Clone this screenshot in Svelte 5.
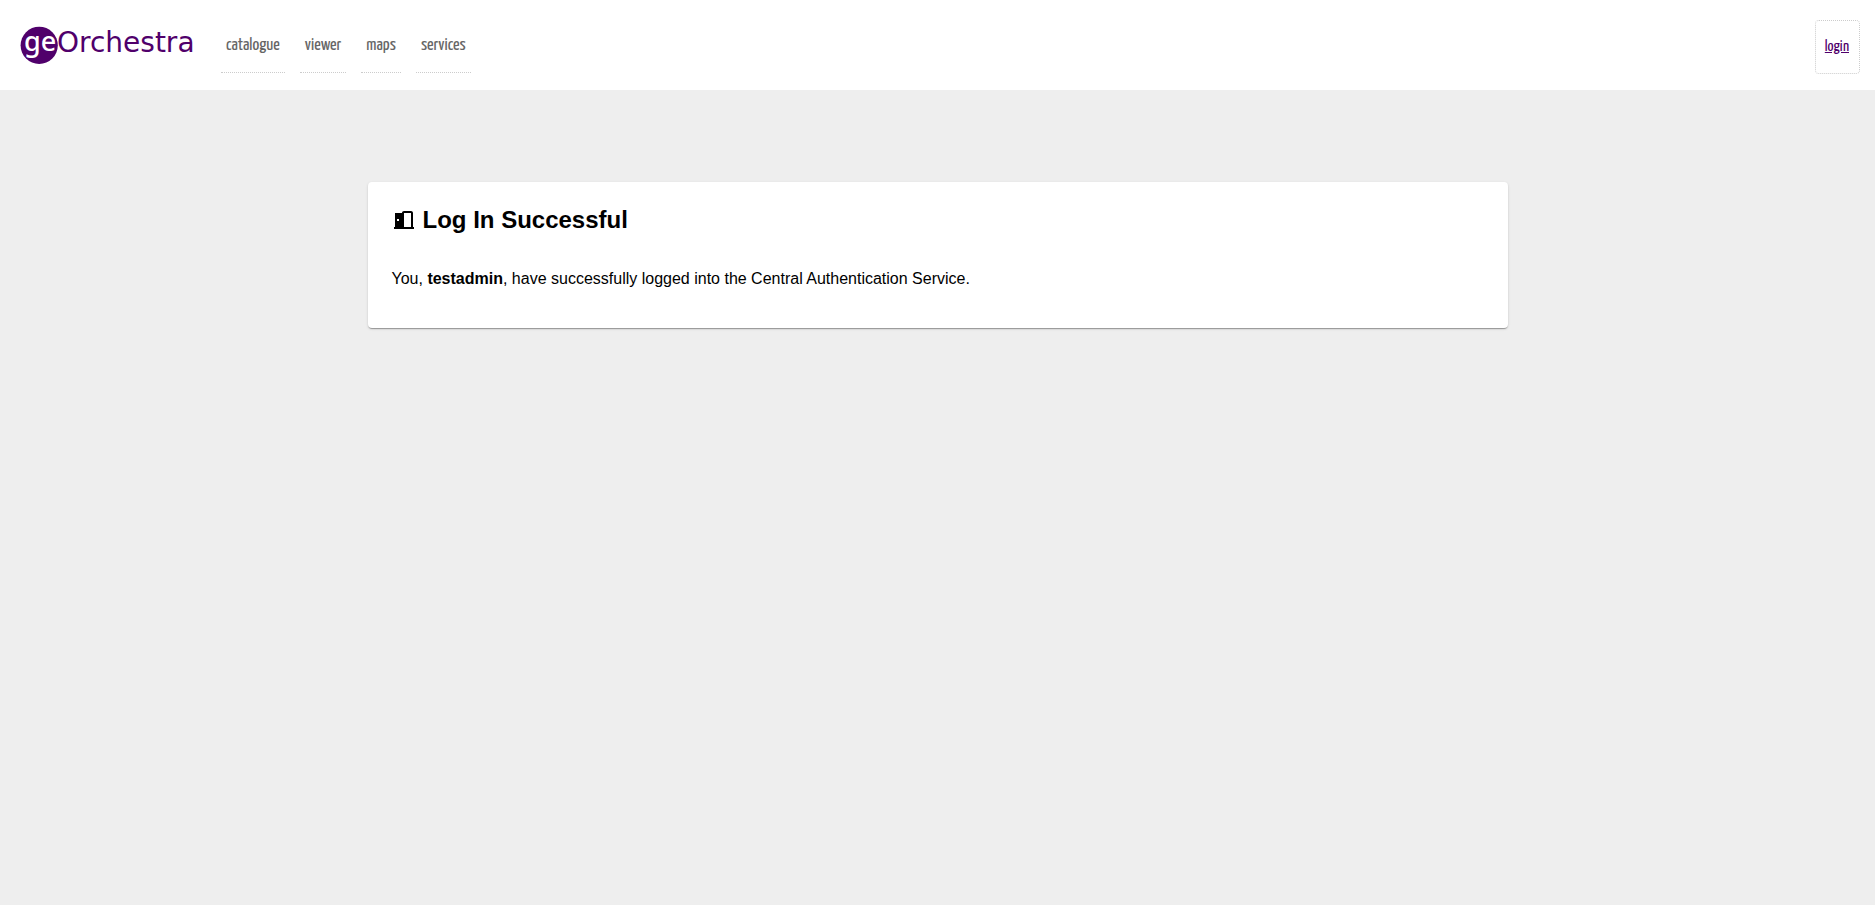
<script>
  const links = ['catalogue', 'viewer', 'maps', 'services'];
  const user = 'testadmin';
</script>

<div class="page">
  <header>
    <a class="logo" href="#home" aria-label="geOrchestra">
      <svg viewBox="0 0 178 44" role="img" aria-hidden="true">
        <circle cx="19.2" cy="22.3" r="18.6" fill="#50006b" />
        <text class="ge" x="4" y="28">ge</text>
        <text class="name" x="37" y="29">Orchestra</text>
      </svg>
    </a>
    <nav>
      {#each links as link}
        <a href={'#' + link}>{link}</a>
      {/each}
    </nav>
    <a class="login" href="#login">login</a>
  </header>

  <main>
    <section class="card">
      <h2>
        <svg viewBox="0 0 24 24" aria-hidden="true">
          <path d="M12,3C10.89,3 10,3.89 10,5H3V19H2V21H22V19H21V5C21,3.89 20.11,3 19,3H12M12,5H19V19H12V5M5,11H7V13H5V11Z" />
        </svg>
        <span>Log In Successful</span>
      </h2>
      <p>You, <strong>{user}</strong>, have successfully logged into the Central Authentication Service.</p>
    </section>
  </main>
</div>

<style>
  :global(body) {
    margin: 0;
    background: #eee;
  }

  .page {
    min-height: 100vh;
    background: #eee;
    color: #000;
    font-family: "Liberation Sans", Arial, sans-serif;
    font-size: 16px;
  }

  header {
    display: flex;
    align-items: center;
    box-sizing: border-box;
    height: 90px;
    padding: 0 15px 0 20px;
    background: #fff;
    font-family: "Yanone Kaffeesatz", "Roboto Condensed", "Liberation Sans", sans-serif;
  }

  .logo {
    display: block;
    width: 178px;
    height: 44px;
    margin-right: 23px;
  }

  .logo svg {
    display: block;
    width: 100%;
    height: 100%;
    overflow: visible;
  }

  .ge {
    fill: #fff;
    font-family: "Noto Sans", "Open Sans", sans-serif;
    font-size: 27px;
    font-weight: 500;
  }

  .name {
    fill: #50006b;
    font-family: "DejaVu Sans", sans-serif;
    font-size: 28px;
  }

  nav {
    display: flex;
    gap: 15px;
    margin-right: auto;
  }

  nav a {
    padding: 17px 5px 15px;
    border-bottom: 1px dotted #ccc;
    color: #666;
    font-size: 18px;
    line-height: 22px;
    text-decoration: none;
  }

  .login {
    margin-top: 4px;
    padding: 15px 10px 15px 9px;
    border: 1px dotted #ccc;
    border-radius: 4px;
    color: #50006b;
    font-size: 16px;
    line-height: 22px;
    text-decoration: underline;
  }

  main {
    box-sizing: border-box;
    max-width: 1140px;
    margin: 0 auto;
    padding-top: 92px;
  }

  .card {
    padding: 24px;
    border-radius: 4px;
    background: #fff;
    box-shadow:
      0 2px 1px -1px rgba(0, 0, 0, 0.2),
      0 1px 1px 0 rgba(0, 0, 0, 0.14),
      0 1px 3px 0 rgba(0, 0, 0, 0.12);
  }

  h2 {
    display: flex;
    align-items: center;
    gap: 7px;
    margin: 0 0 36px;
    font-size: 24px;
    line-height: 28px;
  }

  h2 svg {
    width: 24px;
    height: 24px;
    fill: currentColor;
  }

  p {
    margin: 0 0 16px;
    line-height: 18px;
  }
</style>
